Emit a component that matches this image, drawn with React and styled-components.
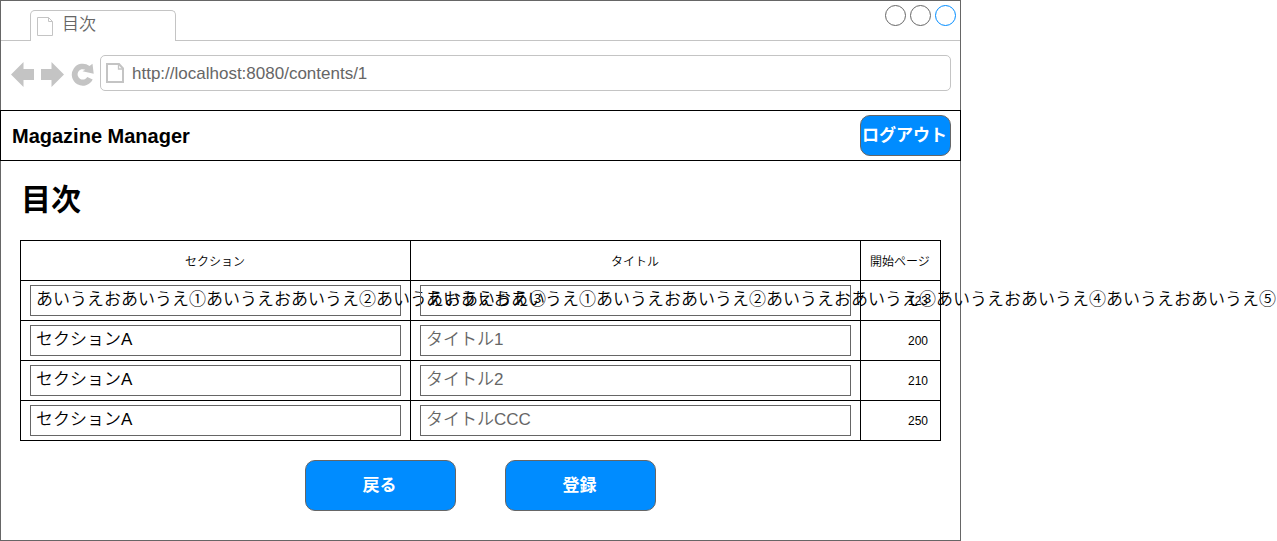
import React from "react";
import styled, { createGlobalStyle } from "styled-components";

const GlobalStyle = createGlobalStyle`
  * { box-sizing: border-box; }
  body {
    margin: 0;
    background: #fff;
    color: #000;
    font-family: "Liberation Sans", "Noto Sans CJK JP", sans-serif;
    overflow: hidden;
  }
`;

const Window = styled.div`
  display: flex;
  flex-direction: column;
  width: 961px;
  height: 541px;
  border: 1px solid #666;
`;

const TabStrip = styled.div`
  display: flex;
  align-items: flex-end;
  justify-content: space-between;
  height: 40px;
  padding: 0 4px 0 29px;
  border-bottom: 1px solid #c4c4c4;
`;

const Tab = styled.div`
  display: flex;
  gap: 8px;
  width: 146px;
  height: 31px;
  margin-bottom: -1px;
  padding: 6px 0 0 6px;
  border: 1px solid #c4c4c4;
  border-bottom: 0;
  border-radius: 5px 5px 0 0;
  background: #fff;
`;

const TabTitle = styled.span`
  margin-top: -4px;
  font-size: 17px;
  font-weight: 350;
  line-height: 24px;
  color: #666;
`;

const Controls = styled.div`
  display: flex;
  gap: 4px;
  align-self: flex-start;
  margin-top: 4px;
`;

const Control = styled.span`
  width: 21px;
  height: 21px;
  border: 1px solid ${(p) => (p.$active ? "#008cff" : "#666")};
  border-radius: 50%;
`;

const NavBar = styled.div`
  display: flex;
  align-items: flex-start;
  height: 69px;
  padding: 14px 9px 0 10px;
`;

const NavIcons = styled.svg`
  flex: none;
  width: 84px;
  height: 30px;
  margin: 5px 5px 0 0;
  fill: #c4c4c4;
`;

const Address = styled.div`
  display: flex;
  flex: 1;
  align-items: center;
  gap: 7px;
  height: 36px;
  padding-left: 5px;
  border: 1px solid #c4c4c4;
  border-radius: 5px;
  font-size: 17px;
  color: #666;
`;

const Url = styled.span`
  padding-top: 2px;
`;

const DocSvg = styled.svg`
  display: block;
  flex: none;
  fill: none;
  stroke: #c4c4c4;
`;

const AppHeader = styled.header`
  display: flex;
  align-items: center;
  justify-content: space-between;
  height: 51px;
  margin: 0 -1px;
  padding: 0 9px 0 11px;
  border: 1px solid #000;
`;

const Brand = styled.div`
  padding-top: 2px;
  font-size: 20px;
  font-weight: 700;
`;

const Button = styled.button`
  width: ${(p) => (p.$compact ? 91 : 151)}px;
  height: ${(p) => (p.$compact ? 41 : 51)}px;
  padding: 0 2px ${(p) => (p.$compact ? 5 : 4)}px 0;
  border: 1px solid #666;
  border-radius: 10px;
  background: #008cff;
  color: #fff;
  font: 700 17px "Liberation Sans", "Noto Sans CJK JP", sans-serif;
  white-space: nowrap;
`;

const Content = styled.main`
  padding: 17px 19px 0;
`;

const Heading = styled.h1`
  margin: 0 0 18px 1px;
  font-size: 30px;
  line-height: 44px;
  font-weight: 700;
`;

const Table = styled.div`
  display: grid;
  grid-template-columns: 390px 450px 80px;
  grid-auto-rows: 40px;
  width: 921px;
  border: solid #000;
  border-width: 1px 0 0 1px;
`;

const Cell = styled.div`
  min-width: 0;
  padding: 4px 9px;
  border: solid #000;
  border-width: 0 1px 1px 0;
`;

const HeadCell = styled(Cell)`
  padding: 1px 1px 0 0;
  font-size: 12px;
  font-weight: 350;
  line-height: 40px;
  text-align: center;
  white-space: nowrap;
`;

const PageCell = styled(Cell)`
  padding: 0 12px 0 0;
  font-size: 12px;
  line-height: 40px;
  text-align: right;
`;

const Field = styled.div`
  height: 31px;
  padding-left: 5px;
  border: 1px solid #666;
  font-size: 17px;
  font-weight: 350;
  line-height: 28px;
  white-space: nowrap;
  color: ${(p) => (p.$muted ? "#666" : "#000")};
`;

const Actions = styled.div`
  display: flex;
  justify-content: center;
  gap: 49px;
  margin-top: 19px;
`;

const rows = [
  {
    section: "あいうえおあいうえ①あいうえおあいうえ②あいうえおあいうえ③",
    title: "あいうえおあいうえ①あいうえおあいうえ②あいうえおあいうえ③あいうえおあいうえ④あいうえおあいうえ⑤",
    page: 123,
    filled: true,
  },
  { section: "セクションA", title: "タイトル1", page: 200 },
  { section: "セクションA", title: "タイトル2", page: 210 },
  { section: "セクションA", title: "タイトルCCC", page: 250 },
];

function TabDocIcon() {
  return (
    <DocSvg width="17" height="20" viewBox="0 0 17 20">
      <path d="M.5 .5H11.500L15.500 4.500V18.500H.5ZM11.500 .5V4.500H15.500" />
    </DocSvg>
  );
}

function AddressDocIcon() {
  return (
    <DocSvg width="19" height="22" viewBox="0 0 19 22" strokeWidth="2">
      <path d="M1 2H13L17 6.500V20H1Z" />
      <path d="M12.500 2V7H17" strokeWidth="1.300" />
    </DocSvg>
  );
}

export default function App() {
  return (
    <>
      <GlobalStyle />
      <Window>
        <TabStrip>
          <Tab>
            <TabDocIcon />
            <TabTitle>目次</TabTitle>
          </Tab>
          <Controls>
            <Control />
            <Control />
            <Control $active />
          </Controls>
        </TabStrip>
        <NavBar>
          <NavIcons viewBox="11 60 84 30">
            <path d="M11 74.500L23.500 62V69H34V80H23.500V87Z" />
            <path d="M64 74.500L51.500 62V69H41V80H51.500V87Z" />
            <path d="M92.700 79.500A11 11 0 1 1 89.500 66L92.500 63.800L93.700 73.700L82.500 71.300L85.300 69.800A5.200 5.200 0 1 0 87.300 77Z" />
          </NavIcons>
          <Address>
            <AddressDocIcon />
            <Url>http://localhost:8080/contents/1</Url>
          </Address>
        </NavBar>
        <AppHeader>
          <Brand>Magazine Manager</Brand>
          <Button $compact>ログアウト</Button>
        </AppHeader>
        <Content>
          <Heading>目次</Heading>
          <Table>
            <HeadCell>セクション</HeadCell>
            <HeadCell>タイトル</HeadCell>
            <HeadCell>開始ページ</HeadCell>
            {rows.map((row) => (
              <React.Fragment key={row.page}>
                <Cell>
                  <Field>{row.section}</Field>
                </Cell>
                <Cell>
                  <Field $muted={!row.filled}>{row.title}</Field>
                </Cell>
                <PageCell>{row.page}</PageCell>
              </React.Fragment>
            ))}
          </Table>
          <Actions>
            <Button>戻る</Button>
            <Button>登録</Button>
          </Actions>
        </Content>
      </Window>
    </>
  );
}
